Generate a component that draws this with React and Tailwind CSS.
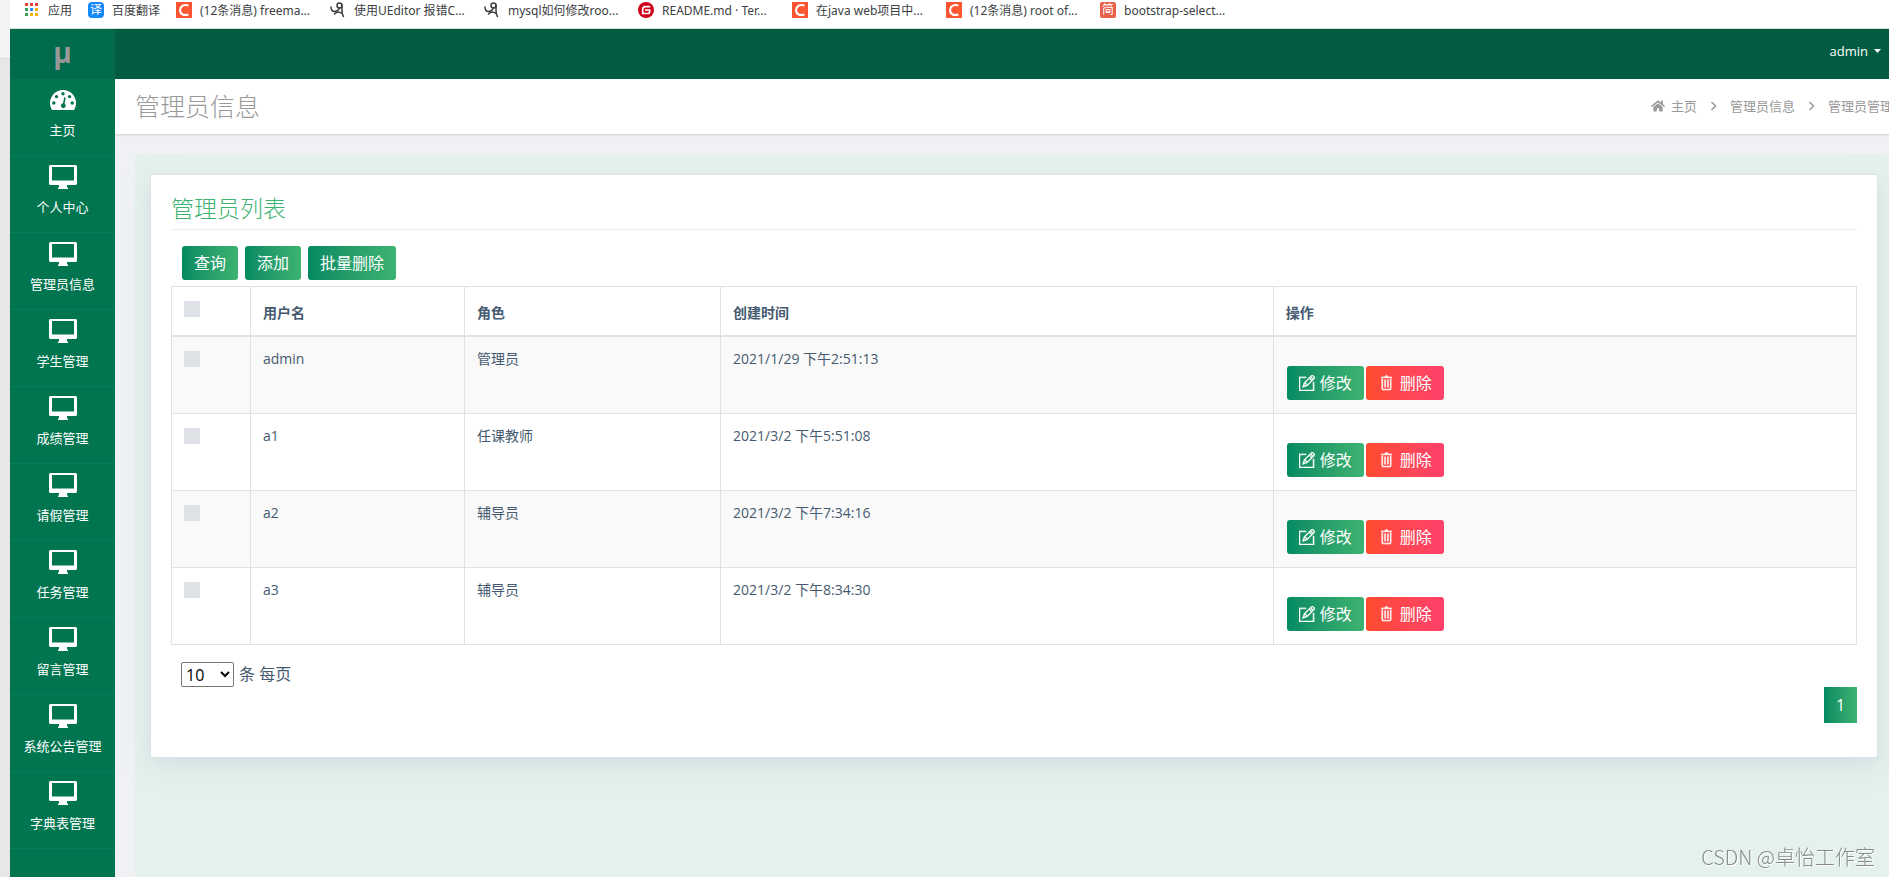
import React, { useState } from "react";
import { TfiPencilAlt, TfiTrash } from "react-icons/tfi";
import { FaHome } from "react-icons/fa";

const menus = [
  "个人中心",
  "管理员信息",
  "学生管理",
  "成绩管理",
  "请假管理",
  "任务管理",
  "留言管理",
  "系统公告管理",
  "字典表管理",
];

const users = [
  { id: 1, name: "admin", role: "管理员", time: "2021/1/29 下午2:51:13" },
  { id: 2, name: "a1", role: "任课教师", time: "2021/3/2 下午5:51:08" },
  { id: 3, name: "a2", role: "辅导员", time: "2021/3/2 下午7:34:16" },
  { id: 4, name: "a3", role: "辅导员", time: "2021/3/2 下午8:34:30" },
];

const AppsIcon = () => (
  <svg width="16" height="16" viewBox="0 0 16 16" className="shrink-0">
    <path fill="#ea4335" d="M0 1h3v3H0zM5 1h3v3H5zM10 1h3v3h-3z" />
    <path fill="#34a05a" d="M0 6h3v3H0zM0 11h3v3H0z" />
    <path fill="#2b8af0" d="M5 6h3v3H5z" />
    <path fill="#fbb005" d="M10 6h3v3h-3zM5 11h3v3H5zM10 11h3v3h-3z" />
  </svg>
);

const TranslateIcon = () => (
  <span className="flex h-4 w-4 shrink-0 items-center justify-center rounded-sm bg-[#1487fa] text-xs leading-4 text-white">
    译
  </span>
);

const CsdnIcon = () => (
  <svg width="16" height="16" viewBox="0 0 16 16" className="shrink-0">
    <path fill="#fc5531" d="M0 0h16v16H0z" />
    <path
      fill="none"
      stroke="#fff"
      strokeWidth="2"
      d="M12.5 3.6C8.6 2 4.2 3.6 4.1 8.2c0 4.3 4 5.7 8.3 4.3"
    />
  </svg>
);

const ScriptIcon = () => (
  <svg width="16" height="16" viewBox="0 0 16 16" className="shrink-0">
    <g fill="none" stroke="#3c3c3c" strokeWidth="1.5" strokeLinecap="round">
      <path d="M1 5c0 3 1.500 4.500 3.500 4.500S8.500 8 9.500 6" />
      <circle cx="9.500" cy="3.500" r="2.500" />
      <path d="M12 3v6c0 2 .5 4 1.500 5.500" />
      <path d="M4.500 12c2-2.200 5-2.500 7.500-.5" />
    </g>
  </svg>
);

const GiteeIcon = () => (
  <svg width="16" height="16" viewBox="0 0 16 16" className="shrink-0">
    <circle cx="8" cy="8" r="8" fill="#d0021b" />
    <path
      fill="none"
      stroke="#fff"
      strokeWidth="1.7"
      d="M12.200 4.600H7.200C5.500 4.600 4.700 5.500 4.700 7v4.500h5c1.300 0 2-.8 2-2V8H7"
    />
  </svg>
);

const JianIcon = () => (
  <span className="flex h-4 w-4 shrink-0 items-center justify-center rounded-xs bg-[#e8614a] text-xs leading-4 text-white">
    简
  </span>
);

const bookmarks = [
  { icon: CsdnIcon, text: "(12条消息) freema..." },
  { icon: ScriptIcon, text: "使用UEditor 报错C..." },
  { icon: ScriptIcon, text: "mysql如何修改roo..." },
  { icon: GiteeIcon, text: "README.md · Ter..." },
  { icon: CsdnIcon, text: "在java web项目中..." },
  { icon: CsdnIcon, text: "(12条消息) root of..." },
  { icon: JianIcon, text: "bootstrap-select..." },
];

const DashboardIcon = () => (
  <svg width="26" height="20" viewBox="0 0 26 20">
    <path
      fill="#fff"
      d="M13 0C5.800 0 0 5.800 0 13c0 2.500.7 4.900 2 7h22c1.300-2.100 2-4.500 2-7C26 5.800 20.200 0 13 0z"
    />
    <g fill="#017550">
      <circle cx="3.800" cy="13" r="1.700" />
      <circle cx="6.500" cy="6.600" r="1.700" />
      <circle cx="13" cy="3.800" r="1.700" />
      <circle cx="19.500" cy="6.600" r="1.700" />
      <circle cx="22.200" cy="13" r="1.700" />
      <path d="M14.200 7.300l1.500.4-1.100 6c.9.500 1.300 1.500 1 2.600-.4 1.300-1.600 2-2.900 1.700-1.300-.4-2.100-1.700-1.700-3 .3-1 1.100-1.600 2-1.700z" />
    </g>
  </svg>
);

const DesktopIcon = () => (
  <svg width="28" height="24" viewBox="0 0 28 24">
    <path
      fill="#fff"
      fillRule="evenodd"
      d="M1.500 0h25c.8 0 1.500.7 1.500 1.500v17c0 .8-.7 1.500-1.500 1.500H18v2l1 1v1H9v-1l1-1v-2H1.500C.7 20 0 19.300 0 18.500v-17C0 .7.7 0 1.500 0zM3 2v13.500h22V2z"
    />
  </svg>
);

const Chevron = () => (
  <svg width="7" height="10" viewBox="0 0 7 10">
    <path fill="none" stroke="#999" strokeWidth="1.5" d="M1.500 1l4 4-4 4" />
  </svg>
);

const SideItem = ({ icon, text }) => (
  <li className="h-[77px] border-b border-[#018059]">
    <a href="#" className="flex flex-col items-center pt-[9px] text-white">
      <span className="flex h-6 items-center">{icon}</span>
      <span className="mt-[7px] text-[13px] leading-[22px]">{text}</span>
    </a>
  </li>
);

const Button = ({ danger, children }) => (
  <button
    type="button"
    className={`flex h-[34px] items-center rounded-[3px] px-3 text-base leading-6 text-white bg-linear-to-r ${
      danger ? "from-[#ff4b2b] to-[#ff416c]" : "from-[#028a62] to-[#3cb371]"
    }`}
  >
    {children}
  </button>
);

const Checkbox = ({ label, checked, onChange }) => (
  <input
    type="checkbox"
    aria-label={label}
    checked={checked}
    onChange={onChange}
    className="mt-0.5 block h-4 w-4 appearance-none bg-[#dee2e6] checked:bg-[#3cb371]"
  />
);

const App = () => {
  const [selected, setSelected] = useState([]);
  const [pageSize, setPageSize] = useState("10");

  const toggle = (id) => {
    setSelected((prev) =>
      prev.includes(id) ? prev.filter((x) => x !== id) : [...prev, id]
    );
  };

  const toggleAll = () => {
    setSelected(selected.length === users.length ? [] : users.map((u) => u.id));
  };

  return (
    <div className="flex min-h-screen overflow-hidden font-['Open_Sans','Noto_Sans_CJK_SC',sans-serif] text-[#455a70]">
      <div className="flex w-2.5 shrink-0 flex-col bg-[#e7e7e7]">
        <div className="h-[59px] border-b border-[#dcdcdc] bg-[#f4f4f4]"></div>
      </div>

      <div className="flex min-w-0 grow flex-col">
        {/* bookmarks bar */}
        <nav className="flex h-[29px] items-start overflow-hidden border-b border-[#d9dcdb] bg-white pt-0.5 pl-[15px] font-['Noto_Sans','Noto_Sans_CJK_SC',sans-serif] text-xs leading-[18px] whitespace-nowrap text-[#3c4043]">
          <a href="#" className="flex w-[63px] shrink-0 gap-[7px]">
            <AppsIcon />
            应用
          </a>
          <a href="#" className="flex w-[88px] shrink-0 gap-2">
            <TranslateIcon />
            百度翻译
          </a>
          {bookmarks.map(({ icon: Icon, text }, i) => (
            <a key={i} href="#" className="flex w-[154px] shrink-0 gap-2">
              <Icon />
              {text}
            </a>
          ))}
        </nav>

        <div className="flex grow">
          {/* sidebar */}
          <aside className="w-[105px] shrink-0 bg-[#017550]">
            <div className="flex h-[50px] items-center justify-center bg-[#016b4b] pb-1 text-[28px] leading-8 font-bold text-[#999]">
              μ
            </div>
            <ul>
              <SideItem icon={<DashboardIcon />} text="主页" />
              {menus.map((m) => (
                <SideItem key={m} icon={<DesktopIcon />} text={m} />
              ))}
            </ul>
          </aside>

          <div className="flex min-w-0 grow flex-col bg-[#eff1f5]">
            <header className="flex h-[50px] items-center justify-end bg-[#015c41] pr-2">
              <button
                type="button"
                className="flex items-center gap-1.5 pb-1.5 text-[13px] leading-5 font-medium text-white"
              >
                admin
                <svg width="7" height="4" viewBox="0 0 7 4">
                  <path fill="#fff" d="M0 0h7L3.500 4z" />
                </svg>
              </button>
            </header>

            {/* page title */}
            <div className="flex h-[55px] items-center justify-between overflow-hidden bg-white pb-0.5 pl-5 whitespace-nowrap text-[#999] shadow-[0_1px_2px_rgba(0,0,0,0.15)]">
              <h1 className="text-[25px] leading-9 font-light">管理员信息</h1>
              <ol className="-mr-1 flex items-center text-[13px] leading-5">
                <li>
                  <a href="#" className="flex items-center gap-1.5">
                    <FaHome className="h-3.5 w-3.5" />
                    主页
                  </a>
                </li>
                <li className="px-[13px]">
                  <Chevron />
                </li>
                <li>
                  <a href="#">管理员信息</a>
                </li>
                <li className="px-[13px]">
                  <Chevron />
                </li>
                <li>管理员管理</li>
              </ol>
            </div>

            <main className="mt-5 ml-5 grow bg-[#e5f2eb] pt-5 pr-[11px] pb-8 pl-[15px]">
              <section className="rounded-[3px] border border-[#dbe2e8] bg-white p-5 pt-4 shadow-[0_8px_24px_rgba(176,184,214,0.35)]">
                <h2 className="border-b border-[#eceeef] pb-1 text-[23px] leading-[34px] font-light text-[#3cb371]">
                  管理员列表
                </h2>

                <div className="mt-4 flex gap-[7px] pl-[11px]">
                  <Button>查询</Button>
                  <Button>添加</Button>
                  <Button>批量删除</Button>
                </div>

                <table className="mt-1.5 w-full table-fixed border-collapse text-left text-sm leading-5 [&_td]:border [&_td]:border-[#dee2e6] [&_td]:p-3 [&_td]:align-top [&_th]:border [&_th]:border-b-2 [&_th]:border-[#dee2e6] [&_th]:p-3">
                  <thead>
                    <tr className="h-[49px]">
                      <th className="w-[79px] align-top">
                        <Checkbox
                          label="全选"
                          checked={selected.length === users.length}
                          onChange={toggleAll}
                        />
                      </th>
                      <th className="w-[12.7%] align-bottom">用户名</th>
                      <th className="w-[15.2%] align-bottom">角色</th>
                      <th className="w-[32.8%] align-bottom">创建时间</th>
                      <th className="align-bottom">操作</th>
                    </tr>
                  </thead>
                  <tbody>
                    {users.map((u) => (
                      <tr
                        key={u.id}
                        className="h-[77px] odd:bg-[#f9f9f9] first:h-[78px]"
                      >
                        <td>
                          <Checkbox
                            label={u.name}
                            checked={selected.includes(u.id)}
                            onChange={() => toggle(u.id)}
                          />
                        </td>
                        <td>{u.name}</td>
                        <td>{u.role}</td>
                        <td>{u.time}</td>
                        <td>
                          <div className="flex gap-0.5 pt-[17px] pl-px">
                            <Button>
                              <TfiPencilAlt className="mr-[5px] h-4 w-4 stroke-[0.6px]" />
                              修改
                            </Button>
                            <Button danger>
                              <TfiTrash className="mr-1.5 h-4 w-4 stroke-[0.6px]" />
                              删除
                            </Button>
                          </div>
                        </td>
                      </tr>
                    ))}
                  </tbody>
                </table>

                <div className="mt-4 flex h-[26px] items-center gap-[5px] pl-2.5 text-base leading-6">
                  <select
                    id="pageSize"
                    value={pageSize}
                    onChange={(e) => setPageSize(e.target.value)}
                    className="h-[25px] w-[53px] rounded-xs border border-[#767676] bg-white text-black"
                  >
                    <option>10</option>
                    <option>25</option>
                    <option>50</option>
                    <option>100</option>
                  </select>
                  <label htmlFor="pageSize">条 每页</label>
                </div>

                <div className="flex justify-end pb-3.5">
                  <button
                    type="button"
                    className="h-9 w-[33px] bg-linear-to-r from-[#028a62] to-[#3cb371] text-base text-white"
                  >
                    1
                  </button>
                </div>
              </section>
            </main>
          </div>
        </div>
      </div>

      <div className="fixed right-3.5 bottom-1.5 font-['Noto_Sans_CJK_SC',sans-serif] text-xl leading-7 font-light text-[#858b88] [text-shadow:1px_1px_0_#fff]">
        CSDN @卓怡工作室
      </div>
    </div>
  );
};

export default App;
